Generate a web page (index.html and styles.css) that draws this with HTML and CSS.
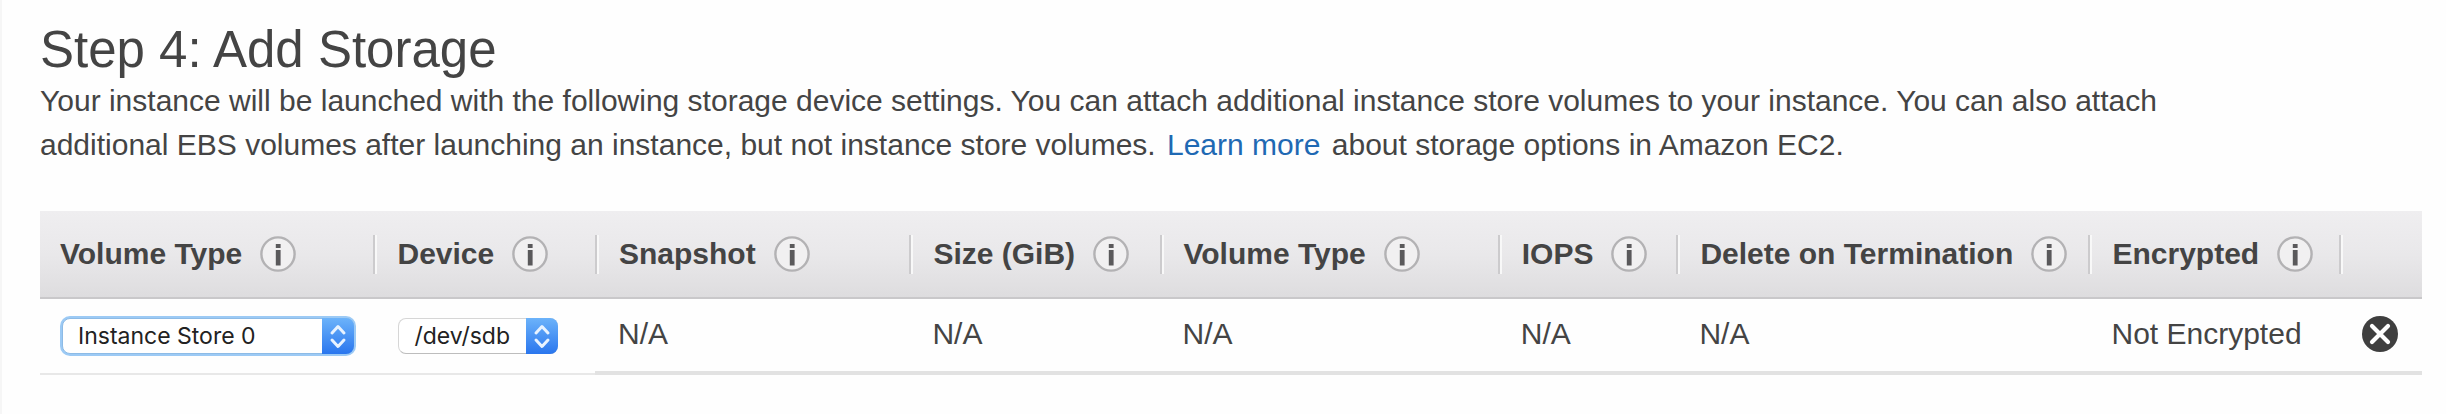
FILE: index.html
```html
<!DOCTYPE html>
<html lang="en">
<head>
<meta charset="utf-8">
<title>Step 4: Add Storage</title>
<link rel="stylesheet" href="styles.css">
</head>
<body>
<svg class="sprite" aria-hidden="true">
  <symbol id="info" viewBox="0 0 36 36">
    <circle cx="18" cy="18" r="16.6" fill="#f1f0f1" stroke="#b3b2b4" stroke-width="2.4"/>
    <rect x="15.8" y="8" width="4.8" height="4" fill="#5a595b"/>
    <rect x="15.8" y="14" width="4.8" height="15.5" fill="#5a595b"/>
  </symbol>
  <symbol id="arrows" viewBox="0 0 32 36">
    <path d="M10 15 16 8.5 22 15M10 22 16 28.5 22 22" fill="none" stroke="#e8f3ff" stroke-width="3" stroke-linecap="round" stroke-linejoin="round"/>
  </symbol>
</svg>
<main class="page">
  <h1 class="title">Step 4: Add Storage</h1>
  <p class="intro">Your instance will be launched with the following storage device settings. You can attach additional instance store volumes to your instance. You can also attach additional EBS volumes after launching an instance, but not instance store volumes. <a class="link" href="#">Learn more</a> about storage options in Amazon EC2.</p>
  <table class="volumes">
    <colgroup>
      <col class="col-volume"><col class="col-device"><col class="col-snapshot"><col class="col-size"><col class="col-type"><col class="col-iops"><col class="col-delete"><col class="col-encrypted"><col class="col-action">
    </colgroup>
    <thead>
      <tr>
        <th scope="col"><div class="head"><span id="volume-label">Volume Type</span><svg class="info"><use href="#info"/></svg></div></th>
        <th scope="col"><div class="head"><span id="device-label">Device</span><svg class="info"><use href="#info"/></svg></div></th>
        <th scope="col"><div class="head">Snapshot<svg class="info"><use href="#info"/></svg></div></th>
        <th scope="col"><div class="head">Size (GiB)<svg class="info"><use href="#info"/></svg></div></th>
        <th scope="col"><div class="head">Volume Type<svg class="info"><use href="#info"/></svg></div></th>
        <th scope="col"><div class="head">IOPS<svg class="info"><use href="#info"/></svg></div></th>
        <th scope="col"><div class="head">Delete on Termination<svg class="info"><use href="#info"/></svg></div></th>
        <th scope="col"><div class="head">Encrypted<svg class="info"><use href="#info"/></svg></div></th>
        <td><div class="head"></div></td>
      </tr>
    </thead>
    <tbody>
      <tr>
        <td class="control"><div class="picker picker-volume"><select class="select select-focus" aria-labelledby="volume-label"><option>Instance Store 0</option></select><svg class="arrows"><use href="#arrows"/></svg></div></td>
        <td class="control"><div class="picker picker-device"><select class="select" aria-labelledby="device-label"><option>/dev/sdb</option></select><svg class="arrows"><use href="#arrows"/></svg></div></td>
        <td>N/A</td>
        <td>N/A</td>
        <td>N/A</td>
        <td>N/A</td>
        <td>N/A</td>
        <td>Not Encrypted</td>
        <td><button class="remove" type="button" aria-label="Remove volume"><svg class="remove-icon" viewBox="0 0 36 36"><circle cx="18" cy="18" r="18" fill="#3f3f3f"/><path d="M10 10 26 26M26 10 10 26" stroke="#fff" stroke-width="4.2" stroke-linecap="round"/></svg></button></td>
      </tr>
    </tbody>
  </table>
</main>
</body>
</html>
```
FILE: styles.css
```css
* {
  box-sizing: border-box;
}

body {
  margin: 0;
  background: #fefefe;
  color: #444;
  font-family: "Liberation Sans", Arial, sans-serif;
  font-size: 30px;
  line-height: 44px;
}

.sprite {
  display: none;
}

.page {
  min-height: 100vh;
  padding: 21px 24px 24px 38px;
  border-left: 2px solid #f6f6f6;
}

.title {
  margin: 0;
  font-size: 51px;
  font-weight: 400;
  line-height: 58px;
}

.intro {
  max-width: 2160px;
  margin: 0 0 44px;
}

.link {
  margin: 0 3px;
  color: #1f69b3;
  text-decoration: none;
}

.volumes {
  width: 100%;
  border-collapse: separate;
  border-spacing: 0;
  table-layout: fixed;
}

.col-volume { width: 14%; }
.col-device { width: 9.3%; }
.col-snapshot { width: 13.2%; }
.col-size { width: 10.5%; }
.col-type { width: 14.2%; }
.col-iops { width: 7.5%; }
.col-delete { width: 17.3%; }
.col-encrypted { width: 10.5%; }
.col-action { width: 3.5%; }

thead tr {
  background: linear-gradient(#efeef0, #e9e8ea 50%, #dddcde);
}

thead th,
thead td {
  height: 88px;
  padding: 0;
  border-bottom: 2px solid #c9c8ca;
  text-align: left;
}

.head {
  display: flex;
  align-items: center;
  gap: 18px;
  height: 39px;
  padding-left: 22px;
  border-left: 2px solid #cccbcd;
  box-shadow: inset 2px 0 #f8f8f8;
  white-space: nowrap;
}

th:first-child .head {
  padding-left: 20px;
  border-left: 0;
  box-shadow: none;
}

.info {
  width: 36px;
  height: 36px;
}

tbody td {
  height: 76px;
  padding: 0 0 2px 23px;
  border-bottom: 4px solid #e2e2e2;
}

tbody .control {
  padding: 0 0 0 25px;
  border-bottom: 2px solid #e8e8e8;
}

tbody .control:first-child {
  padding-left: 22px;
}

.picker {
  display: grid;
  height: 36px;
}

.picker-volume { width: 292px; }
.picker-device { width: 160px; }

.select,
.arrows {
  grid-area: 1 / 1;
}

.select {
  width: 100%;
  height: 36px;
  padding: 0 36px 0 15px;
  appearance: none;
  border: 1px solid #d6d6d6;
  border-bottom-color: #bdbdbd;
  border-radius: 8px;
  outline: 0;
  background: #fff;
  color: #222;
  font: 23px/32px Inter, sans-serif;
}

.select-focus {
  border: 1px solid #8dbbe6;
  box-shadow: 0 0 0 2px #9ccaf5;
}

.arrows {
  justify-self: end;
  width: 32px;
  height: 36px;
  border-radius: 0 8px 8px 0;
  background: linear-gradient(#6cb3fa, #2a76ee);
  pointer-events: none;
}

.remove {
  display: block;
  padding: 0;
  border: 0;
  background: none;
}

.remove-icon {
  display: block;
  width: 36px;
  height: 36px;
}
```
